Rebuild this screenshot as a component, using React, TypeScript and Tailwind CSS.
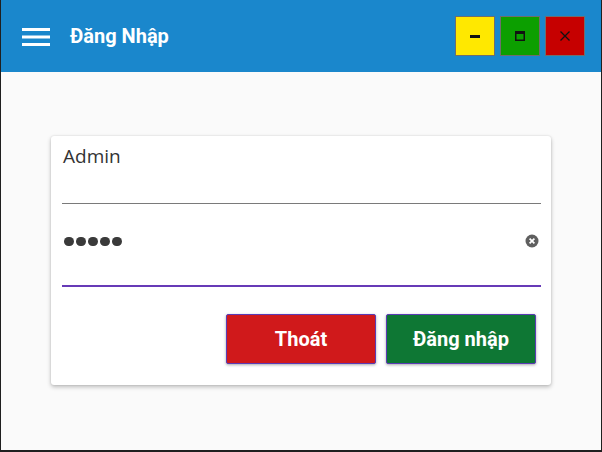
import { Menu } from "lucide-react";

function WinButton({ color, children }: { color: string; children: React.ReactNode }) {
  return (
    <button className={`flex h-[40px] w-[40px] items-center justify-center border border-[#6e6e6e] ${color}`}>
      {children}
    </button>
  );
}

export default function App() {
  return (
    <div className="flex h-[452px] w-[602px] flex-col border-x border-b-2 border-[#1f1f1f] bg-[#fafafa] font-['Roboto',sans-serif]">
      {/* title bar */}
      <header className="flex h-[72px] shrink-0 items-center bg-[#1a87cc] pl-[21px] pr-[16px] text-white">
        <svg width="28" height="20" viewBox="0 0 28 20" className="mt-[1px]">
          <rect x="0" y="1" width="28" height="3" fill="white" />
          <rect x="0" y="8.5" width="28" height="3" fill="white" />
          <rect x="0" y="16" width="28" height="3" fill="white" />
        </svg>
        <h1 className="ml-[20px] text-[20px] font-bold">Đăng Nhập</h1>
        <div className="ml-auto flex gap-[5px]">
          <WinButton color="bg-[#ffe800]">
            <svg width="12" height="12" viewBox="0 0 12 12">
              <rect x="1" y="5" width="10" height="3" fill="#111" />
            </svg>
          </WinButton>
          <WinButton color="bg-[#0c9f00]">
            <svg width="12" height="12" viewBox="0 0 12 12">
              <rect x="1.75" y="1.75" width="8.5" height="8.5" fill="none" stroke="#111" strokeWidth="1.5" />
              <rect x="1" y="1" width="10" height="3" fill="#111" />
            </svg>
          </WinButton>
          <WinButton color="bg-[#c60000]">
            <svg width="12" height="12" viewBox="0 0 12 12">
              <path d="M1.5 1.5 L10.5 10.5 M10.5 1.5 L1.5 10.5" stroke="#111" strokeWidth="1.3" />
            </svg>
          </WinButton>
        </div>
      </header>

      {/* login card */}
      <main className="flex flex-1 justify-center pt-[64px]">
        <div className="h-fit w-[500px] rounded-[3px] bg-white pb-[21px] pl-[11px] pr-[10px] pt-[8px] shadow-[0_2px_4px_rgba(0,0,0,0.25),0_0_2px_rgba(0,0,0,0.12)]">
          <div className="h-[60px] border-b border-[#7a7a7a] pl-[1px] font-['Open_Sans',sans-serif] text-[19px] leading-[24px] text-[#333]">
            Admin
          </div>
          <div className="flex h-[83px] items-start justify-between border-b-2 border-[#673ab7] pl-[2px] pr-[2px] pt-[32px]">
            <div className="flex gap-[2.5px] pt-[0.5px]">
              {[0, 1, 2, 3, 4].map((i) => (
                <span key={i} className="h-[9.5px] w-[9.5px] rounded-full bg-[#3a3a3a]" />
              ))}
            </div>
            <svg width="14" height="14" viewBox="0 0 14 14" className="-mt-[2px]">
              <circle cx="7" cy="7" r="6.5" fill="#5f5f5f" />
              <path d="M4.6 4.6 L9.4 9.4 M9.4 4.6 L4.6 9.4" stroke="white" strokeWidth="1.7" />
            </svg>
          </div>
          <div className="mr-[5px] mt-[27px] flex justify-end gap-[10px]">
            <button className="h-[50px] w-[150px] rounded-[2px] border border-[#5b3bb5] bg-[#d0191b] text-[20px] font-bold text-white shadow-[0_1px_3px_rgba(0,0,0,0.35)]">
              Thoát
            </button>
            <button className="h-[50px] w-[150px] rounded-[2px] border border-[#5b3bb5] bg-[#0e7734] text-[20px] font-bold text-white shadow-[0_1px_3px_rgba(0,0,0,0.35)]">
              Đăng nhập
            </button>
          </div>
        </div>
      </main>
    </div>
  );
}
